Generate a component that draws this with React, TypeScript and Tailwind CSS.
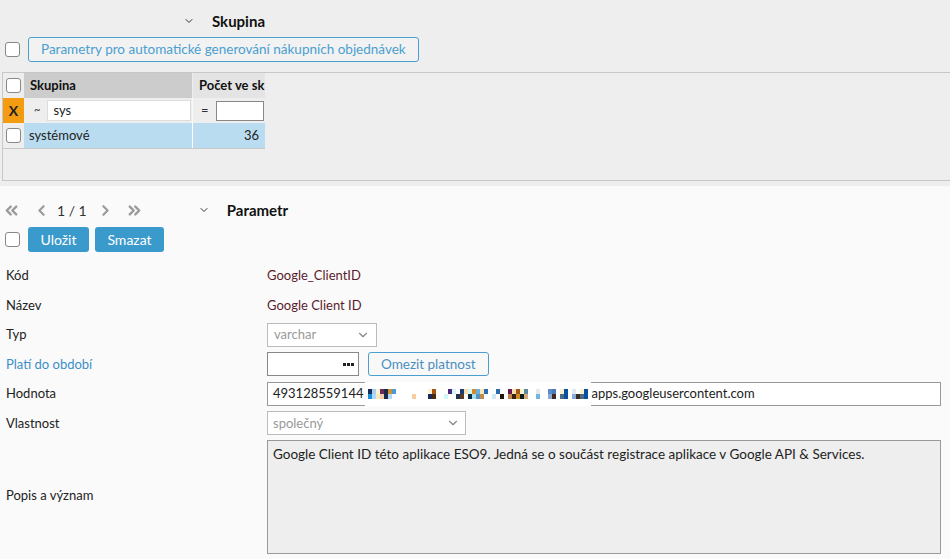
import { ChevronDown, ChevronLeft, ChevronRight, ChevronsLeft, ChevronsRight } from "lucide-react";

const font = "font-['Lato','Liberation_Sans',sans-serif]";

// redacted pixel strip (two rows, 4px blocks)
const topRow = [
  "bg-[#1a2a5a]", "bg-[#a8d0f0]", "bg-[#fdf3d4]", "bg-[#6a2a5a]", "bg-[#1a2a40]", "bg-[#d09030]", "bg-[#4a9ad8]", "", "", "",
  "", "", "", "", "", "bg-[#fdf3d4]", "bg-[#a25810]", "", "", "",
  "bg-[#4a2a80]", "bg-[#d8f4f8]", "", "bg-[#1b3a78]", "bg-[#f8dcb0]", "bg-[#d0f8f8]", "bg-[#d68a30]", "bg-[#6cb0e0]", "bg-[#f8e8b8]", "bg-[#2a6ab0]",
  "", "", "bg-[#2a6ab0]", "", "", "bg-[#6a1a50]", "bg-[#f8e0b0]", "bg-[#a25810]", "bg-[#fdf3d4]", "bg-[#5a8aa0]",
  "", "", "bg-[#e8e8e8]", "", "", "bg-[#5a8ac8]", "bg-[#4a7ab8]", "", "bg-[#f8f0d0]", "bg-[#0a50a0]",
  "", "bg-[#e0e8f0]", "", "bg-[#f8f0d0]", "bg-[#0a50a0]",
];
const botRow = [
  "bg-[#1a90d8]", "bg-[#b0d8f8]", "bg-[#f8e8c0]", "bg-[#f0d0b0]", "bg-[#1a2a4a]", "bg-[#b0d8f8]", "", "", "", "",
  "", "bg-[#f8d0a0]", "", "", "", "bg-[#1a2a5a]", "bg-[#4a2a10]", "", "", "bg-[#d0f8f8]",
  "", "", "bg-[#203050]", "bg-[#5a3a20]", "", "bg-[#0a2a40]", "bg-[#a0e0f0]", "bg-[#5a90c0]", "bg-[#c08a50]", "",
  "", "bg-[#d0e8f8]", "", "bg-[#201810]", "", "bg-[#c08a50]", "bg-[#3a2010]", "bg-[#d09020]", "bg-[#0a1a20]", "bg-[#d8a878]",
  "", "", "bg-[#70b8e0]", "", "", "bg-[#8aa8d8]", "bg-[#3a2a20]", "", "bg-[#4a6a88]", "bg-[#0a50a0]",
  "", "bg-[#8aa8d8]", "bg-[#3a2a20]", "bg-[#4a6a88]", "bg-[#0a50a0]",
];

function Check() {
  return <div className="w-[15px] h-[15px] rounded-[3px] border border-[#888] bg-white shrink-0" />;
}

function Row({ label, blue, children, h = "h-[29.5px]" }: { label: string; blue?: boolean; children: React.ReactNode; h?: string }) {
  return (
    <div className={`flex items-center ${h}`}>
      <div className={`w-[267px] pl-[6px] shrink-0 ${blue ? "text-[#3a8fc8]" : "text-[#222]"}`}>{label}</div>
      <div className="flex-1 flex items-center gap-[9px] pr-[9px]">{children}</div>
    </div>
  );
}

export default function App() {
  return (
    <div className={`w-[950px] h-[559px] overflow-hidden bg-[#fafafa] text-[13px] ${font}`}>
      {/* Skupina section */}
      <div className="bg-[#eeeeee] h-[186px] pt-[10px]">
        <div className="flex items-center h-[22px]">
          <ChevronDown className="ml-[183px] w-[12px] h-[12px] text-[#333]" strokeWidth={2} />
          <span className="ml-[17px] font-bold text-[15px] text-[#111]">Skupina</span>
        </div>
        <div className="flex items-center mt-[5px] h-[25px]">
          <div className="ml-[5px]"><Check /></div>
          <button className="ml-[8px] h-[25px] px-[12px] border border-[#4a9fd0] rounded-[3px] bg-[#f2f2f2] text-[#4a9fd0] text-[13.5px]">
            Parametry pro automatické generování nákupních objednávek
          </button>
        </div>
        <div className="mt-[10px] border-t border-b border-l border-[#c8c8c8] h-[109px] ml-[2px]">
          <div className="w-[262px]">
            <div className="flex h-[25px] bg-[#cccccc]">
              <div className="w-[21px] bg-[#eeeeee] flex items-center justify-center"><Check /></div>
              <div className="w-[169px] flex items-center pl-[6px] font-bold text-[#111] border-r border-[#eeeeee]">Skupina</div>
              <div className="flex-1 flex items-center pl-[6px] font-bold text-[#111] bg-[#e4e4e4] overflow-hidden whitespace-nowrap">Počet ve sk</div>
            </div>
            <div className="flex h-[25px] bg-[#eeeeee]">
              <div className="w-[21px] bg-[#f39c12] flex items-center justify-center font-bold text-[14px] text-[#222]">X</div>
              <div className="w-[169px] flex items-center pl-[10px] border-r border-[#f8f8f8]">
                <span className="text-[11px] text-[#333]">~</span>
                <div className="ml-[7px] w-[144px] h-[21px] bg-white border border-[#ddd] flex items-center pl-[5px] text-[#222]">sys</div>
              </div>
              <div className="flex-1 flex items-center pl-[8px]">
                <span className="text-[#333]">=</span>
                <div className="ml-[7px] w-[48px] h-[20px] bg-white border border-[#888]" />
              </div>
            </div>
            <div className="flex h-[26px] border-b border-[#c8c8c8]">
              <div className="w-[21px] bg-[#eeeeee] flex items-center justify-center"><Check /></div>
              <div className="w-[169px] flex items-center pl-[5px] bg-[#b9dcf0] text-[#222] border-r border-white">systémové</div>
              <div className="flex-1 flex items-center justify-end pr-[6px] bg-[#b9dcf0] text-[#222]">36</div>
            </div>
          </div>
        </div>
      </div>

      {/* Parametr section */}
      <div className="pt-[14px]">
        <div className="flex items-center h-[20px]">
          <div className="flex items-center ml-[2px] text-[#9a9a9a]">
            <ChevronsLeft className="w-[19px] h-[19px]" strokeWidth={3} />
            <ChevronLeft className="ml-[12px] w-[17px] h-[17px]" strokeWidth={3} />
            <span className="ml-[7px] text-[#333] text-[14px]">1 / 1</span>
            <ChevronRight className="ml-[10px] w-[17px] h-[17px]" strokeWidth={3} />
            <ChevronsRight className="ml-[11px] w-[19px] h-[19px]" strokeWidth={3} />
          </div>
          <ChevronDown className="ml-[54px] w-[12px] h-[12px] text-[#333]" strokeWidth={2} />
          <span className="ml-[17px] font-bold text-[15px] text-[#111]">Parametr</span>
        </div>
        <div className="flex items-center mt-[7px] h-[25px]">
          <div className="ml-[5px]"><Check /></div>
          <button className="ml-[8px] h-[25px] w-[61px] rounded-[3px] bg-[#3a9acb] text-white text-[14px]">Uložit</button>
          <button className="ml-[6px] h-[25px] w-[69px] rounded-[3px] bg-[#3a9acb] text-white text-[14px]">Smazat</button>
        </div>

        <div className="mt-[9px]">
          <Row label="Kód"><span className="text-[#5c1b2c]">Google_ClientID</span></Row>
          <Row label="Název"><span className="text-[#5c1b2c]">Google Client ID</span></Row>
          <Row label="Typ">
            <div className="w-[110px] h-[24px] border border-[#bbb] bg-white flex items-center justify-between px-[6px] text-[#999]">
              varchar <ChevronDown className="w-[14px] h-[14px] text-[#888]" strokeWidth={2} />
            </div>
          </Row>
          <Row label="Platí do období" blue>
            <div className="w-[92px] h-[24px] border border-[#888] bg-white flex items-center justify-end gap-[1px] pr-[4px]">
              <div className="w-[3px] h-[3px] bg-[#222]" />
              <div className="w-[3px] h-[3px] bg-[#222]" />
              <div className="w-[3px] h-[3px] bg-[#222]" />
            </div>
            <button className="h-[24px] px-[12px] border border-[#4a9fd0] rounded-[3px] bg-[#f8f8f8] text-[#4a8fc0] text-[13.5px]">Omezit platnost</button>
          </Row>
          <Row label="Hodnota">
            <div className="flex-1 h-[24px] border border-[#999] bg-white flex items-center pl-[5px] text-[#222] whitespace-nowrap">
              <span>493128559144</span>
              <div className="ml-[2px] w-[226px] h-[24px] bg-white flex flex-col justify-center">
                <div className="flex pl-[3px]">
                  {topRow.map((c, i) => (
                    <div key={i} className={`w-[4px] h-[5px] ${c}`} />
                  ))}
                </div>
                <div className="flex pl-[3px]">
                  {botRow.map((c, i) => (
                    <div key={i} className={`w-[4px] h-[5px] ${c}`} />
                  ))}
                </div>
              </div>
              <span>apps.googleusercontent.com</span>
            </div>
          </Row>
          <Row label="Vlastnost">
            <div className="w-[199px] h-[24px] border border-[#bbb] bg-white flex items-center justify-between px-[5px] text-[#999]">
              společný <ChevronDown className="w-[14px] h-[14px] text-[#888]" strokeWidth={2} />
            </div>
          </Row>
          <Row label="Popis a význam" h="h-[116px]">
            <div className="flex-1 h-[114px] border border-[#999] bg-[#eeeeee] px-[5px] pt-[3px] text-[#222] text-[13.5px] self-start mt-[1px]">
              Google Client ID této aplikace ESO9. Jedná se o součást registrace aplikace v Google API &amp; Services.
            </div>
          </Row>
        </div>
      </div>
    </div>
  );
}
